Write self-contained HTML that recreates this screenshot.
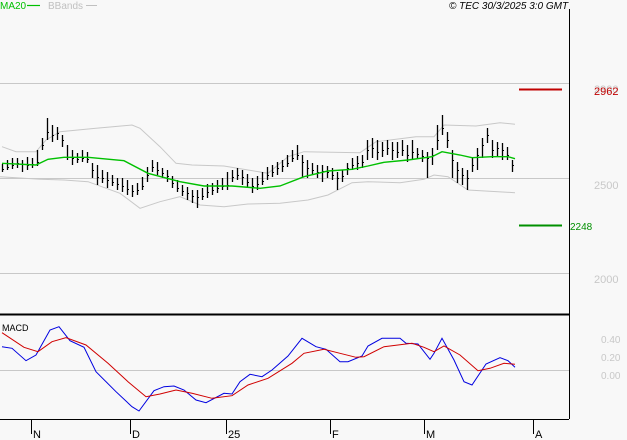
<!DOCTYPE html>
<html><head><meta charset="utf-8">
<style>
html,body{margin:0;padding:0;background:#f8f8f8;}
svg{display:block;font-family:"Liberation Sans",sans-serif;}
</style></head><body>
<svg width="627" height="440" viewBox="0 0 627 440" xmlns="http://www.w3.org/2000/svg">
<rect width="627" height="440" fill="#f8f8f8"/>
<line x1="0" y1="83.5" x2="569" y2="83.5" stroke="#c8c8c8"/>
<line x1="0" y1="178.5" x2="569" y2="178.5" stroke="#c8c8c8"/>
<line x1="0" y1="273.5" x2="569" y2="273.5" stroke="#c8c8c8"/>
<line x1="0" y1="370.5" x2="569" y2="370.5" stroke="#c8c8c8"/>
<g fill="none" stroke="#c8c8c8">
<polyline points="2,146.7 16,151.7 36,151.7 46,140 60,131.7 96,128.3 132,125 140,128.3 160,146.7 176,163.3 192,165 224,166 248,170 268,173.3 288,156.7 304,151.7 360,152.7 376,141.7 416,136.7 434,136.7 444,125 476,126 500,122.7 515,124.3"/>
<polyline points="0,176.7 40,179.3 64,180 88,181.7 120,193.3 140,208.3 160,201.7 180,196.7 200,205 224,206.7 248,204 280,203.3 308,200 328,195 352,182.7 368,181.7 400,182.7 424,179.3 434,175 448,176.7 468,190 515,192.7"/>
</g>
<path fill="none" stroke="#000" stroke-width="1.3" d="
M2.5 164V172M7.5 160V170M12.5 158V169M17.5 158V168M22.5 160V172M27.5 157V170M32.5 158V168M37.5 150V166M42.5 138V150M47.5 118V140M52.5 125V142M57.5 127V140M62.5 135V147M67.5 145V160M72.5 150V165M77.5 153V163M82.5 150V162M87.5 152V163M92.5 163V178M97.5 165V185M102.5 170V183M107.5 172V188M112.5 175V186M117.5 178V190M122.5 178V192M127.5 180V195M132.5 185V197M137.5 183V195M142.5 177V190M147.5 167V182M152.5 160V172M157.5 162V175M162.5 168V178M167.5 170V182M172.5 176V188M177.5 180V192M182.5 185V196M187.5 187V200M192.5 190V203M197.5 190V208M202.5 188V200M207.5 184V198M212.5 183V195M217.5 180V193M222.5 178V190M227.5 172V190M232.5 170V182M237.5 168V180M242.5 170V185M247.5 174V188M252.5 178V193M257.5 176V190M262.5 172V185M267.5 167V180M272.5 165V177M277.5 162V175M282.5 160V172M287.5 155V167M292.5 150V162M297.5 145V160M302.5 155V178M307.5 160V178M312.5 163V175M317.5 165V178M322.5 165V182M327.5 166V178M332.5 168V180M337.5 172V190M342.5 170V182M347.5 163V175M352.5 158V170M357.5 156V170M362.5 155V168M367.5 140V160M372.5 138V158M377.5 140V160M382.5 142V157M387.5 140V155M392.5 142V160M397.5 142V158M402.5 140V156M407.5 145V162M412.5 140V160M417.5 148V158M422.5 150V162M427.5 152V178M432.5 148V165M437.5 125V150M442.5 115V135M447.5 132V148M452.5 150V178M457.5 162V183M462.5 168V185M467.5 170V190M472.5 158V172M477.5 148V170M482.5 138V158M487.5 128V143M492.5 140V158M497.5 142V157M502.5 143V160M507.5 147V160M512.5 160V172"/>
<path fill="none" stroke="#000" d="
M2 169.5h2M7 167.5h2M12 165.5h2M17 163.5h2M22 164.5h2M27 165.5h2M32 164.5h2M37 162.5h2M42 145.5h2M47 132.5h2M52 135.5h2M57 133.5h2M62 140.5h2M67 157.5h2M72 158.5h2M77 159.5h2M82 158.5h2M87 159.5h2M92 170.5h2M97 177.5h2M102 178.5h2M107 180.5h2M112 182.5h2M117 184.5h2M122 186.5h2M127 189.5h2M132 191.5h2M137 190.5h2M142 186.5h2M147 175.5h2M152 167.5h2M157 170.5h2M162 173.5h2M167 176.5h2M172 183.5h2M177 188.5h2M182 191.5h2M187 193.5h2M192 196.5h2M197 197.5h2M202 196.5h2M207 192.5h2M212 190.5h2M217 188.5h2M222 186.5h2M227 185.5h2M232 177.5h2M237 175.5h2M242 177.5h2M247 182.5h2M252 186.5h2M257 184.5h2M262 181.5h2M267 175.5h2M272 172.5h2M277 168.5h2M282 166.5h2M287 163.5h2M292 158.5h2M297 155.5h2M302 162.5h2M307 168.5h2M312 170.5h2M317 172.5h2M322 171.5h2M327 172.5h2M332 175.5h2M337 178.5h2M342 176.5h2M347 168.5h2M352 165.5h2M357 163.5h2M362 162.5h2M367 150.5h2M372 148.5h2M377 152.5h2M382 150.5h2M387 148.5h2M392 150.5h2M397 152.5h2M402 150.5h2M407 155.5h2M412 152.5h2M417 154.5h2M422 156.5h2M427 158.5h2M432 155.5h2M437 140.5h2M442 128.5h2M447 140.5h2M452 160.5h2M457 170.5h2M462 175.5h2M467 178.5h2M472 165.5h2M477 155.5h2M482 145.5h2M487 135.5h2M492 150.5h2M497 148.5h2M502 150.5h2M507 155.5h2M512 165.5h2"/>
<polyline fill="none" stroke="#00c000" stroke-width="1.4" points="2,163.3 36,165 48,159.3 64,157.3 88,157.3 124,160.7 148,173.3 180,181.7 204,186 232,186 260,188.3 280,186 304,176.7 328,171 352,169.3 368,166 384,162.3 408,160 432,156.7 442,151.7 460,155 472,157.7 492,156.7 508,156.7 515,158.7"/>
<polyline fill="none" stroke="#0000e0" points="2,346.7 12,348.3 26,360.7 36,355 50,330 59,326.7 70,340.7 84,347.3 96,371.7 116,391.7 132,406.7 139,411 154,390.7 164,386.7 174,386 184,390 196,400 206,402.7 224,393.3 232,394 240,381.7 250,374.3 262,376.7 272,370 288,356 302,338.3 316,346.7 326,349.3 340,361.7 348,361.7 362,356 368,346 382,338.3 400,338.3 406,343.3 418,344 430,359.3 434,353.3 442,338.3 454,360 464,381.7 472,385 486,364 500,357.7 508,360.7 515,367.3"/>
<polyline fill="none" stroke="#d00000" points="2,332.7 24,347.3 38,351.7 52,341.7 66,337.7 86,345 108,363.3 128,381.7 146,396.7 160,394 176,390 192,393.3 212,398.3 232,395.7 248,385 268,378.3 292,363.3 304,353.3 324,349.3 340,353.3 356,357.3 364,356.7 384,346.7 412,343.3 424,347.3 434,351.7 444,346 460,355 478,370.7 490,368.3 504,363.3 515,364.3"/>
<line x1="569.5" y1="9" x2="569.5" y2="419" stroke="#000"/>
<line x1="0" y1="314.5" x2="569" y2="314.5" stroke="#000" stroke-width="2"/>
<line x1="0" y1="419.5" x2="569" y2="419.5" stroke="#000"/>
<g stroke="#000">
<line x1="31.5" y1="420" x2="31.5" y2="434"/>
<line x1="130.5" y1="420" x2="130.5" y2="434"/>
<line x1="226.5" y1="420" x2="226.5" y2="434"/>
<line x1="330.5" y1="420" x2="330.5" y2="434"/>
<line x1="424.5" y1="420" x2="424.5" y2="434"/>
<line x1="533.5" y1="420" x2="533.5" y2="434"/>
</g>
<g font-size="11" fill="#000">
<text x="33" y="438">N</text>
<text x="132" y="438">D</text>
<text x="228" y="438">25</text>
<text x="332" y="438">F</text>
<text x="426" y="438">M</text>
<text x="535" y="438">A</text>
</g>
<text x="0" y="9" font-size="10" fill="#00c000">MA20</text>
<line x1="27" y1="5.5" x2="40" y2="5.5" stroke="#00c000" stroke-width="1.2"/>
<text x="48" y="9" font-size="10" fill="#c0c0c0">BBands</text>
<line x1="86" y1="5.5" x2="97" y2="5.5" stroke="#c0c0c0"/>
<text x="449" y="9" font-size="10" font-style="italic" fill="#000">© TEC 30/3/2025 3:0 GMT</text>
<text x="2" y="331" font-size="9" fill="#000">MACD</text>
<g font-size="11" fill="#c8c8c8">
<text x="594" y="93">2900</text>
<text x="594" y="189">2500</text>
<text x="594" y="283">2000</text>
</g>
<g font-size="10" fill="#c8c8c8">
<text x="601" y="343">0.40</text>
<text x="601" y="361">0.20</text>
<text x="601" y="379">0.00</text>
</g>
<line x1="519" y1="89.5" x2="562" y2="89.5" stroke="#c00000" stroke-width="2"/>
<text x="594" y="95" font-size="11" fill="#c00000">2962</text>
<line x1="519" y1="225.5" x2="562" y2="225.5" stroke="#009000" stroke-width="2"/>
<text x="570" y="230" font-size="10" fill="#009000">2248</text>
</svg>
</body></html>
